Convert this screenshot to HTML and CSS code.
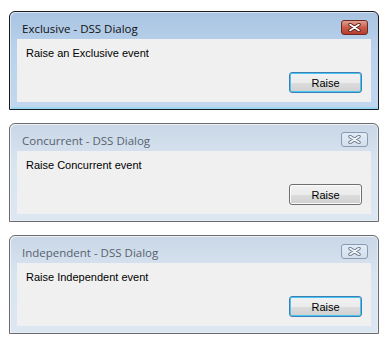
FILE: index.html
```html
<!DOCTYPE html>
<html lang="en">
<head>
    <meta charset="UTF-8">
    <title>DSS Dialogs</title>
    <link rel="stylesheet" href="styles.css">
</head>
<body>
    <div class="stack">
        <div class="dialog active">
            <div class="titlebar">
                <span class="title">Exclusive - DSS Dialog</span>
                <span class="close">
                    <svg width="13" height="9" viewBox="0 0 13 9">
                        <path d="M2 1.5 L11 7.5 M11 1.5 L2 7.5" class="x-outline"/>
                        <path d="M2 1.5 L11 7.5 M11 1.5 L2 7.5" class="x-fill"/>
                    </svg>
                </span>
            </div>
            <div class="content">
                <p class="message">Raise an Exclusive event</p>
                <button class="btn default">Raise</button>
            </div>
        </div>

        <div class="dialog">
            <div class="titlebar">
                <span class="title">Concurrent - DSS Dialog</span>
                <span class="close">
                    <svg width="13" height="9" viewBox="0 0 13 9">
                        <path d="M2 1.5 L11 7.5 M11 1.5 L2 7.5" class="x-outline"/>
                        <path d="M2 1.5 L11 7.5 M11 1.5 L2 7.5" class="x-fill"/>
                    </svg>
                </span>
            </div>
            <div class="content">
                <p class="message">Raise Concurrent event</p>
                <button class="btn">Raise</button>
            </div>
        </div>

        <div class="dialog">
            <div class="titlebar">
                <span class="title">Independent - DSS Dialog</span>
                <span class="close">
                    <svg width="13" height="9" viewBox="0 0 13 9">
                        <path d="M2 1.5 L11 7.5 M11 1.5 L2 7.5" class="x-outline"/>
                        <path d="M2 1.5 L11 7.5 M11 1.5 L2 7.5" class="x-fill"/>
                    </svg>
                </span>
            </div>
            <div class="content">
                <p class="message">Raise Independent event</p>
                <button class="btn default">Raise</button>
            </div>
        </div>
    </div>
</body>
</html>
```

FILE: styles.css
```css
body {
    margin: 0;
    background: #fff;
    font-family: 'Liberation Sans', Arial, sans-serif;
}

.stack {
    display: flex;
    flex-direction: column;
    gap: 13px;
    padding: 11px 0 0 9px;
}

.dialog {
    width: 368px;
    height: 97px;
    border: 1px solid #6b6b6b;
    border-radius: 6px 6px 0 0;
    background: linear-gradient(#c9d7e6, #d9e4f1 40%, #dce7f3);
    box-shadow: inset 1px 1px 0 #eef3f9, inset -1px -1px 0 #e4ecf5;
    display: flex;
    flex-direction: column;
}

.dialog.active {
    border-color: #1b1b1b;
    background: linear-gradient(#a9c4e2, #bad2ec 40%, #c2d8ef);
    box-shadow: inset 1px 1px 0 #d6e5f4, inset 0 -2px 0 #9ad8f2;
}

.titlebar {
    height: 27px;
    display: flex;
    align-items: center;
    justify-content: space-between;
    padding: 0 10px 0 12px;
}

.title {
    font-family: 'Open Sans', 'Noto Sans', sans-serif;
    font-size: 11.5px;
    color: #56626d;
    padding-top: 5px;
}

.active .title {
    color: #101010;
}

.close {
    width: 25px;
    height: 13px;
    border: 1px solid #8a9bb0;
    border-radius: 3px;
    background: linear-gradient(#e2ebf5, #d3dfec);
    display: flex;
    align-items: center;
    justify-content: center;
    margin-top: 4px;
}

.active .close {
    border-color: #6c2a22;
    background: linear-gradient(#e2a090, #c95d4c 50%, #b73c2a);
}

.x-outline {
    stroke: #6b7989;
    stroke-width: 3.4;
    stroke-linecap: round;
    fill: none;
}

.x-fill {
    stroke: #f4f7fb;
    stroke-width: 1.6;
    stroke-linecap: round;
    fill: none;
}

.active .x-outline {
    stroke: #5a1f16;
}

.active .x-fill {
    stroke: #fff;
}

.content {
    flex: 1;
    margin: 0 7px 7px;
    background: #f0f0f0;
    padding: 8px 9px 9px;
    display: flex;
    flex-direction: column;
    justify-content: space-between;
}

.message {
    margin: 0;
    font-size: 11px;
    color: #000;
}

.btn {
    align-self: flex-end;
    width: 73px;
    height: 21px;
    font-family: 'Liberation Sans', Arial, sans-serif;
    font-size: 11px;
    color: #000;
    border: 1px solid #707070;
    border-radius: 3px;
    background: linear-gradient(#f2f2f2, #ebebeb 50%, #dddddd 51%, #cfcfcf);
    box-shadow: inset 0 0 0 1px #fbfbfb;
    padding: 0;
}

.btn.default {
    border-color: #3c7fb1;
    box-shadow: inset 0 0 0 1px #48c4f4;
}
```
